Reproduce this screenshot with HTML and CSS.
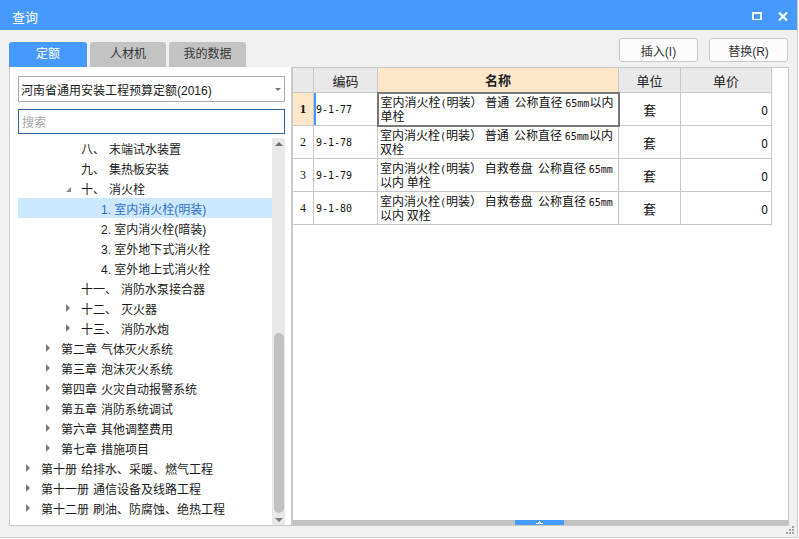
FILE: index.html
```html
<!DOCTYPE html>
<html lang="zh-CN">
<head>
<meta charset="utf-8">
<title>查询</title>
<link rel="stylesheet" href="styles.css">
</head>
<body>
<div class="window">
  <div class="titlebar">
    <span class="title">查询</span>
    <div class="winctl">
      <svg class="ico-max" width="10" height="8" viewBox="0 0 10 8"><path d="M0 0H10V8H0Z M2 2V7H8V2Z" fill="#fff" fill-rule="evenodd"/></svg>
      <svg class="ico-close" width="10" height="9" viewBox="0 0 10 9"><path d="M1 0.5L9 8.5M9 0.5L1 8.5" stroke="#fff" stroke-width="2.2"/></svg>
    </div>
  </div>

  <div class="topbar">
    <div class="tabs">
      <div class="tab tab-a active">定额</div>
      <div class="tab tab-b">人材机</div>
      <div class="tab tab-c">我的数据</div>
    </div>
    <div class="actions">
      <button class="btn">插入(I)</button>
      <button class="btn">替换(R)</button>
    </div>
  </div>

  <div class="content">
    <div class="left">
      <div class="select"><span>河南省通用安装工程预算定额(2016)</span><span class="caret"></span></div>
      <div class="search">搜索</div>
      <div class="treewrap">
        <div class="tree">
          <div class="node l2"><span class="exp"></span><span class="k">八、</span>末端试水装置</div>
          <div class="node l2"><span class="exp"></span><span class="k">九、</span>集热板安装</div>
          <div class="node l2"><span class="exp"><i class="tri-d"></i></span><span class="k">十、</span>消火栓</div>
          <div class="node l3 sel"><span class="exp"></span>1. 室内消火栓(明装)</div>
          <div class="node l3"><span class="exp"></span>2. 室内消火栓(暗装)</div>
          <div class="node l3"><span class="exp"></span>3. 室外地下式消火栓</div>
          <div class="node l3"><span class="exp"></span>4. 室外地上式消火栓</div>
          <div class="node l2"><span class="exp"></span><span class="k">十一、</span>消防水泵接合器</div>
          <div class="node l2"><span class="exp"><i class="tri-r"></i></span><span class="k">十二、</span>灭火器</div>
          <div class="node l2"><span class="exp"><i class="tri-r"></i></span><span class="k">十三、</span>消防水炮</div>
          <div class="node l1"><span class="exp"><i class="tri-r"></i></span><span class="k">第二章</span>气体灭火系统</div>
          <div class="node l1"><span class="exp"><i class="tri-r"></i></span><span class="k">第三章</span>泡沫灭火系统</div>
          <div class="node l1"><span class="exp"><i class="tri-r"></i></span><span class="k">第四章</span>火灾自动报警系统</div>
          <div class="node l1"><span class="exp"><i class="tri-r"></i></span><span class="k">第五章</span>消防系统调试</div>
          <div class="node l1"><span class="exp"><i class="tri-r"></i></span><span class="k">第六章</span>其他调整费用</div>
          <div class="node l1"><span class="exp"><i class="tri-r"></i></span><span class="k">第七章</span>措施项目</div>
          <div class="node l0"><span class="exp"><i class="tri-r"></i></span><span class="k">第十册</span>给排水、采暖、燃气工程</div>
          <div class="node l0"><span class="exp"><i class="tri-r"></i></span><span class="k">第十一册</span>通信设备及线路工程</div>
          <div class="node l0"><span class="exp"><i class="tri-r"></i></span><span class="k">第十二册</span>刷油、防腐蚀、绝热工程</div>
        </div>
        <div class="vscroll">
          <i class="arr-up"></i>
          <div class="vthumb"></div>
          <i class="arr-down"></i>
        </div>
      </div>
    </div>

    <div class="grid">
      <table class="tbl">
        <colgroup>
          <col class="c-num"><col class="c-code"><col class="c-name"><col class="c-unit"><col class="c-price">
        </colgroup>
        <thead>
          <tr><th></th><th>编码</th><th class="hl">名称</th><th>单位</th><th>单价</th></tr>
        </thead>
        <tbody>
          <tr>
            <td class="num cur">1</td>
            <td class="code focus">9-1-77</td>
            <td class="name selcell"><span class="ln">室内消火栓<span class="hw">(</span>明装） 普通&nbsp; 公称直径 <span class="hw">65mm</span>以内</span><span class="ln">单栓</span></td>
            <td class="unit">套</td>
            <td class="price">0</td>
          </tr>
          <tr>
            <td class="num">2</td>
            <td class="code">9-1-78</td>
            <td class="name"><span class="ln">室内消火栓<span class="hw">(</span>明装） 普通&nbsp; 公称直径 <span class="hw">65mm</span>以内</span><span class="ln">双栓</span></td>
            <td class="unit">套</td>
            <td class="price">0</td>
          </tr>
          <tr>
            <td class="num">3</td>
            <td class="code">9-1-79</td>
            <td class="name"><span class="ln">室内消火栓<span class="hw">(</span>明装） 自救卷盘&nbsp; 公称直径 <span class="hw">65mm</span></span><span class="ln">以内 单栓</span></td>
            <td class="unit">套</td>
            <td class="price">0</td>
          </tr>
          <tr>
            <td class="num">4</td>
            <td class="code">9-1-80</td>
            <td class="name"><span class="ln">室内消火栓<span class="hw">(</span>明装） 自救卷盘&nbsp; 公称直径 <span class="hw">65mm</span></span><span class="ln">以内 双栓</span></td>
            <td class="unit">套</td>
            <td class="price">0</td>
          </tr>
        </tbody>
      </table>
      <div class="hscroll">
        <div class="hthumb">
          <svg width="7" height="3" viewBox="0 0 7 3"><path d="M3 0H4V1H5V2H7V3H0V2H2V1H3Z" fill="#fff"/></svg>
        </div>
      </div>
    </div>
  </div>

  <svg class="grip" width="10" height="9" viewBox="0 0 10 9">
    <rect x="7" y="0" width="2" height="2" fill="#a6a6a6"/>
    <rect x="4" y="3" width="2" height="2" fill="#a6a6a6"/>
    <rect x="7" y="3" width="2" height="2" fill="#a6a6a6"/>
    <rect x="1" y="6" width="2" height="2" fill="#a6a6a6"/>
    <rect x="4" y="6" width="2" height="2" fill="#a6a6a6"/>
    <rect x="7" y="6" width="2" height="2" fill="#a6a6a6"/>
  </svg>
</div>
</body>
</html>
```

FILE: styles.css
```css
* {
  box-sizing: border-box;
  margin: 0;
  padding: 0;
}

html, body {
  width: 799px;
  height: 539px;
  overflow: hidden;
  background: #ffffff;
}

body {
  font-family: "Liberation Sans", "Noto Sans CJK SC", sans-serif;
  font-size: 12px;
  color: #1a1a1a;
}

.window {
  position: relative;
  width: 798px;
  height: 538px;
  background: #f0f0f0;
  border-right: 1px solid #cdcdcd;
  border-bottom: 1px solid #cdcdcd;
  display: flex;
  flex-direction: column;
}

/* title bar */
.titlebar {
  flex: none;
  height: 30px;
  background: #4699fd;
  color: #ffffff;
  display: flex;
  align-items: center;
  padding: 0 9px 0 12px;
}

.title {
  flex: 1;
  font-size: 13px;
  padding-top: 2px;
}

.winctl {
  display: flex;
  align-items: center;
  gap: 16px;
  padding-top: 2px;
}

/* tabs + buttons */
.topbar {
  flex: none;
  height: 37px;
  display: flex;
  justify-content: space-between;
  padding: 0 9px 0 9px;
}

.tabs {
  display: flex;
  gap: 3px;
  align-self: flex-end;
}

.tab {
  height: 25px;
  line-height: 25px;
  text-align: center;
  background: #c3c3c3;
  color: #333333;
  border-radius: 3px 3px 0 0;
  font-size: 12px;
}

.tab-a { width: 78px; }
.tab-b { width: 76px; }
.tab-c { width: 77px; }

.tab.active {
  background: #4699fd;
  color: #ffffff;
}

.actions {
  display: flex;
  gap: 11px;
  padding-top: 8px;
}

.btn {
  width: 79px;
  height: 24px;
  border: 1px solid #c8c8c8;
  border-radius: 3px;
  background: #fcfcfc;
  font-family: inherit;
  font-size: 12px;
  color: #333333;
}

/* content */
.content {
  flex: none;
  height: 459px;
  display: flex;
  padding: 0 8px 0 9px;
}

.left {
  width: 283px;
  flex: none;
  background: #ffffff;
  border: 1px solid #c9c9c9;
  border-top: none;
  display: flex;
  flex-direction: column;
  padding: 9px 6px 0 8px;
}

.select {
  flex: none;
  height: 26px;
  border: 1px solid #acacac;
  display: flex;
  align-items: center;
  justify-content: space-between;
  padding: 0 3px 0 2px;
  font-size: 12px;
  color: #1a1a1a;
}

.caret {
  width: 0;
  height: 0;
  border-left: 3px solid transparent;
  border-right: 3px solid transparent;
  border-top: 3px solid #777777;
  margin-top: 1px;
}

.search {
  flex: none;
  height: 25px;
  margin-top: 7px;
  border: 1px solid #2f5d9e;
  color: #a8a8a8;
  padding-left: 3px;
  display: flex;
  align-items: center;
}

.treewrap {
  flex: 1;
  min-height: 0;
  margin-top: 4px;
  display: flex;
}

.tree {
  flex: 1;
  overflow: hidden;
}

.node {
  height: 20px;
  display: flex;
  align-items: center;
  white-space: nowrap;
  color: #1a1a1a;
}

.node.sel {
  background: #cce8ff;
  color: #2c6cc4;
}

.l1 { padding-left: 20px; }
.l2 { padding-left: 40px; }
.l3 { padding-left: 60px; }

.exp {
  flex: none;
  width: 23px;
  height: 20px;
  display: flex;
  align-items: center;
  padding-left: 8px;
}

.tri-r {
  width: 0;
  height: 0;
  border-left: 4px solid #7b7b7b;
  border-top: 4px solid transparent;
  border-bottom: 4px solid transparent;
}

.tri-d {
  width: 0;
  height: 0;
  border-bottom: 5px solid #8a8a8a;
  border-left: 5px solid transparent;
  margin-top: 3px;
}

.k {
  margin-right: 4px;
}

.vscroll {
  flex: none;
  width: 13px;
  background: #e8e8e8;
  display: flex;
  flex-direction: column;
  align-items: center;
}

.arr-up {
  width: 0;
  height: 0;
  border-left: 4px solid transparent;
  border-right: 4px solid transparent;
  border-bottom: 4px solid #6d6d6d;
  margin-top: 4px;
}

.vthumb {
  width: 10px;
  height: 180px;
  border-radius: 5px;
  background: #c1c1c1;
  margin-top: 187px;
}

.arr-down {
  width: 0;
  height: 0;
  border-left: 4px solid transparent;
  border-right: 4px solid transparent;
  border-top: 4px solid #7a7a7a;
  margin-top: auto;
  margin-bottom: 3px;
}

/* grid */
.grid {
  flex: 1;
  background: #ffffff;
  border: 1px solid #c9c9c9;
  display: flex;
  flex-direction: column;
  overflow: hidden;
}

.tbl {
  border-collapse: collapse;
  table-layout: fixed;
  width: 479px;
  margin: -1px 0 0 -1px;
  font-family: "Noto Sans CJK SC", sans-serif;
  font-size: 12px;
  color: #111111;
}

.c-num { width: 21px; }
.c-code { width: 64px; }
.c-name { width: 241px; }
.c-unit { width: 62px; }
.c-price { width: 91px; }

.tbl th,
.tbl td {
  border: 1px solid #c8c8c8;
}

.tbl th {
  height: 25px;
  background: #e9e9e9;
  font-weight: normal;
  font-size: 13px;
  color: #222222;
  text-align: center;
}

.tbl th.hl {
  background: #fee7c9;
  font-weight: bold;
}

.tbl td {
  height: 33px;
  vertical-align: middle;
}

.num {
  text-align: center;
  font-family: "Liberation Serif", serif;
  font-size: 12px;
}

.num.cur {
  background: #fee7c9;
  font-weight: bold;
  font-size: 13px;
}

.code {
  padding-left: 2px;
  font-family: "DejaVu Sans Mono", monospace;
  font-size: 10px;
}

.code.focus {
  box-shadow: inset 2px 0 0 #4699fd;
}

.name {
  padding: 0 2px;
  white-space: nowrap;
  overflow: hidden;
}

.ln {
  display: block;
  height: 14px;
  line-height: 14px;
}

.hw {
  font-family: "DejaVu Sans Mono", monospace;
  font-size: 10px;
}

.tbl td.selcell {
  border: 2px solid #777777;
}

.unit {
  text-align: center;
  font-size: 13px;
}

.price {
  text-align: right;
  padding-right: 3px;
}

.hscroll {
  margin-top: auto;
  flex: none;
  height: 5px;
  background: #c2c2c2;
  display: flex;
}

.hthumb {
  margin-left: 222px;
  width: 49px;
  height: 5px;
  background: #4699fd;
  display: flex;
  justify-content: center;
  align-items: flex-end;
  padding-bottom: 1px;
}

.hthumb svg {
  display: block;
}

.grip {
  position: absolute;
  right: 2px;
  bottom: 2px;
}
```
